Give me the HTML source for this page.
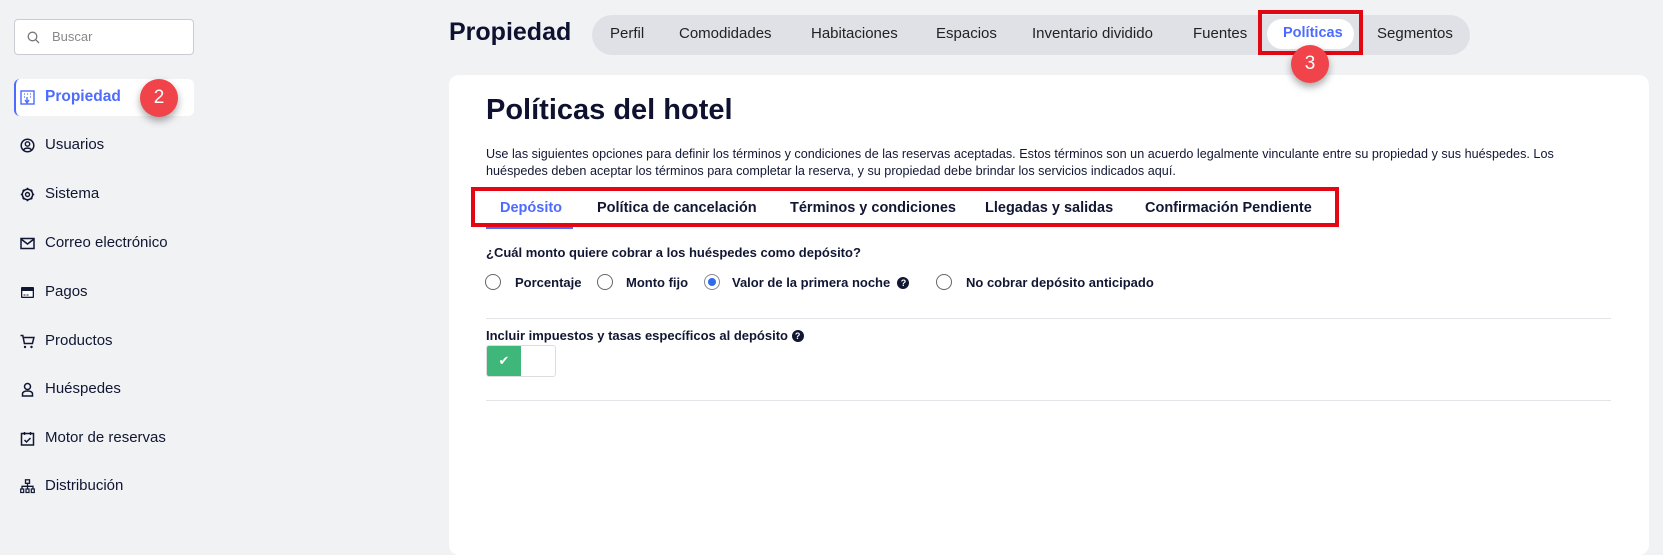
<!DOCTYPE html>
<html><head><meta charset="utf-8"><style>
*{box-sizing:border-box;margin:0;padding:0}
body{width:1663px;height:522px;overflow:hidden;background:#f1f2f4;font-family:"Liberation Sans",sans-serif;color:#111633;position:relative}
.a{position:absolute;white-space:nowrap}
.search{left:14px;top:19px;width:180px;height:36px;border:1px solid #c9ccd2;border-radius:4px;background:#fff}
.side{left:45px;font-size:15px;color:#111633}
.ic{position:absolute;left:20px;width:15px;height:15px}
.badge{width:38px;height:38px;border-radius:50%;background:#f0434a;color:#fff;font-size:19px;text-align:center;line-height:38px;box-shadow:0 4px 8px rgba(0,0,0,.35)}
.nav{font-size:15px;color:#222;top:25px}
.tab{font-size:14.5px;font-weight:bold;top:200px;color:#111633}
.rad{width:16px;height:16px;border:1px solid #666;border-radius:50%;background:#fff;top:274px}
.lab{font-size:13px;font-weight:bold;top:275px;color:#111633}
.q{display:inline-block;width:12px;height:12px;border-radius:50%;background:#111633;color:#fff;font-size:9px;text-align:center;line-height:12px;font-weight:bold;vertical-align:1px}
</style></head><body>
<div class="a search"><svg style="position:absolute;left:12px;top:11px" width="13" height="13" viewBox="0 0 13 13"><circle cx="5.5" cy="5.5" r="4.3" fill="none" stroke="#777" stroke-width="1.3"/><path d="M8.7 8.7L12 12" stroke="#777" stroke-width="1.3"/></svg><span style="position:absolute;left:37px;top:9px;font-size:13px;color:#888">Buscar</span></div>

<div class="a" style="left:14px;top:79px;width:180px;height:37px;background:#fff;border-radius:6px;border-left:2px solid #4d6bfe"></div>
<svg class="ic" style="top:90px" viewBox="0 0 15 15"><rect x="1" y="1" width="13" height="13" fill="none" stroke="#4d6bfe" stroke-width="1.4"/><path d="M4 4h1M7 4h1M10 4h1M4 7h1M10 7h1M7 7v6M5 10l2 3 2-3" stroke="#4d6bfe" stroke-width="1.3" fill="none"/></svg>
<div class="a side" style="top:88px;color:#4d6bfe;font-weight:bold;font-size:15.5px">Propiedad</div>
<div class="a badge" style="left:140px;top:79px">2</div>

<svg class="ic" style="top:138px" viewBox="0 0 15 15"><circle cx="7.5" cy="7.5" r="6.3" fill="none" stroke="#111633" stroke-width="1.5"/><circle cx="7.5" cy="6" r="2.2" fill="none" stroke="#111633" stroke-width="1.4"/><path d="M3.5 12c1.5-2.5 6.5-2.5 8 0" stroke="#111633" stroke-width="1.4" fill="none"/></svg>
<div class="a side" style="top:136px">Usuarios</div>
<svg class="ic" style="top:187px" viewBox="0 0 15 15"><circle cx="7.5" cy="7.5" r="5.2" fill="none" stroke="#111633" stroke-width="1.5"/><circle cx="7.5" cy="7.5" r="2" fill="none" stroke="#111633" stroke-width="1.4"/><path d="M7.5 0.8v2M7.5 12.2v2M0.8 7.5h2M12.2 7.5h2M2.8 2.8l1.3 1.3M10.9 10.9l1.3 1.3M2.8 12.2l1.3-1.3M10.9 4.1l1.3-1.3" stroke="#111633" stroke-width="1.6"/></svg>
<div class="a side" style="top:185px">Sistema</div>
<svg class="ic" style="top:236px" viewBox="0 0 15 15"><rect x="1" y="2.5" width="13" height="10" fill="none" stroke="#111633" stroke-width="1.5"/><path d="M1 3l6.5 5 6.5-5" stroke="#111633" stroke-width="1.5" fill="none"/></svg>
<div class="a side" style="top:234px">Correo electrónico</div>
<svg class="ic" style="top:285px" viewBox="0 0 15 15"><rect x="1" y="2" width="13" height="11" rx="1" fill="#111633"/><rect x="2.3" y="6" width="10.4" height="5.7" fill="#fff"/><path d="M3.5 10h2M6.5 10h2" stroke="#111633"/></svg>
<div class="a side" style="top:283px">Pagos</div>
<svg class="ic" style="top:334px" viewBox="0 0 15 15"><path d="M0.5 1.5h2.3l1.6 8h8l1.5-6H3.5" fill="none" stroke="#111633" stroke-width="1.5"/><circle cx="5" cy="13" r="1.2" fill="#111633"/><circle cx="11.5" cy="13" r="1.2" fill="#111633"/></svg>
<div class="a side" style="top:332px">Productos</div>
<svg class="ic" style="top:382px" viewBox="0 0 15 15"><circle cx="7.5" cy="4.5" r="3" fill="none" stroke="#111633" stroke-width="1.5"/><path d="M2.5 14v-2c0-2 2-3 5-3s5 1 5 3v2z" fill="none" stroke="#111633" stroke-width="1.5"/></svg>
<div class="a side" style="top:380px">Huéspedes</div>
<svg class="ic" style="top:431px" viewBox="0 0 15 15"><rect x="1.5" y="2.5" width="12" height="11.5" fill="none" stroke="#111633" stroke-width="1.5"/><path d="M4.5 1v3M10.5 1v3M4.5 9l2 2 4-4" stroke="#111633" stroke-width="1.5" fill="none"/></svg>
<div class="a side" style="top:429px">Motor de reservas</div>
<svg class="ic" style="top:479px" viewBox="0 0 15 15"><rect x="5.5" y="0.8" width="4" height="3.5" fill="none" stroke="#111633" stroke-width="1.3"/><path d="M7.5 4.3v3M2 10V7.3h11V10M7.5 7.3V10" stroke="#111633" stroke-width="1.3" fill="none"/><rect x="0.7" y="10" width="3" height="3.5" fill="none" stroke="#111633" stroke-width="1.2"/><rect x="6" y="10" width="3" height="3.5" fill="none" stroke="#111633" stroke-width="1.2"/><rect x="11.3" y="10" width="3" height="3.5" fill="none" stroke="#111633" stroke-width="1.2"/></svg>
<div class="a side" style="top:477px">Distribución</div>

<div class="a" style="left:449px;top:18px;font-size:25px;font-weight:bold;color:#0e1230">Propiedad</div>
<div class="a" style="left:592px;top:15px;width:878px;height:40px;background:#dfe1e6;border-radius:20px"></div>
<div class="a nav" style="left:610px">Perfil</div>
<div class="a nav" style="left:679px">Comodidades</div>
<div class="a nav" style="left:811px">Habitaciones</div>
<div class="a nav" style="left:936px">Espacios</div>
<div class="a nav" style="left:1032px">Inventario dividido</div>
<div class="a nav" style="left:1193px">Fuentes</div>
<div class="a" style="left:1267px;top:19px;width:87px;height:30px;background:#fff;border-radius:15px"></div>
<div class="a nav" style="left:1283px;color:#4d6bfe;font-weight:bold;font-size:14.5px">Políticas</div>
<div class="a nav" style="left:1377px">Segmentos</div>
<div class="a" style="left:1258px;top:10px;width:105px;height:45px;border:4px solid #e30613"></div>

<div class="a" style="left:449px;top:75px;width:1200px;height:480px;background:#fff;border-radius:10px"></div>
<div class="a badge" style="left:1291px;top:45px">3</div>

<div class="a" style="left:486px;top:94px;font-size:29px;font-weight:bold;color:#0e1230">Políticas del hotel</div>
<div class="a" style="left:486px;top:146px;font-size:12.6px;line-height:17px;color:#111633;letter-spacing:0.02px">Use las siguientes opciones para definir los términos y condiciones de las reservas aceptadas. Estos términos son un acuerdo legalmente vinculante entre su propiedad y sus huéspedes. Los<br>huéspedes deben aceptar los términos para completar la reserva, y su propiedad debe brindar los servicios indicados aquí.</div>

<div class="a tab" style="left:500px;color:#4d6bfe">Depósito</div>
<div class="a tab" style="left:597px">Política de cancelación</div>
<div class="a tab" style="left:790px">Términos y condiciones</div>
<div class="a tab" style="left:985px">Llegadas y salidas</div>
<div class="a tab" style="left:1145px">Confirmación Pendiente</div>
<div class="a" style="left:486px;top:226px;width:87px;height:3px;background:#4d6bfe"></div>
<div class="a" style="left:471px;top:187px;width:868px;height:40px;border:4px solid #e30613"></div>

<div class="a" style="left:486px;top:245px;font-size:13px;font-weight:bold">¿Cuál monto quiere cobrar a los huéspedes como depósito?</div>
<div class="a rad" style="left:485px"></div><div class="a lab" style="left:515px">Porcentaje</div>
<div class="a rad" style="left:597px"></div><div class="a lab" style="left:626px">Monto fijo</div>
<div class="a rad" style="left:704px;border-color:#888"><div style="width:8px;height:8px;border-radius:50%;background:#2d6bf0;margin:3px"></div></div><div class="a lab" style="left:732px">Valor de la primera noche &nbsp;<span class="q">?</span></div>
<div class="a rad" style="left:936px"></div><div class="a lab" style="left:966px">No cobrar depósito anticipado</div>
<div class="a" style="left:486px;top:318px;width:1125px;height:1px;background:#e3e4e7"></div>
<div class="a" style="left:486px;top:328px;font-size:13px;font-weight:bold">Incluir impuestos y tasas específicos al depósito <span class="q">?</span></div>
<div class="a" style="left:486px;top:345px;width:70px;height:32px;border:1px solid #dcdde0;border-radius:3px;overflow:hidden;background:#fff"><div style="width:34px;height:100%;background:#3fb67a;color:#fff;text-align:center;line-height:30px;font-size:13px">✔</div></div>
<div class="a" style="left:486px;top:400px;width:1125px;height:1px;background:#e3e4e7"></div>
</body></html>
